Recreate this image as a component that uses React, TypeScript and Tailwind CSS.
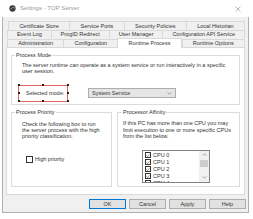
import React from 'react';

// --- Tab rows (back to front) ---
const tabRows: string[][] = [
  ['Certificate Store', 'Service Ports', 'Security Policies', 'Local Historian'],
  ['Event Log', 'ProgID Redirect', 'User Manager', 'Configuration API Service'],
  ['Administration', 'Configuration', 'Runtime Process', 'Runtime Options'],
];

const activeTab = 'Runtime Process';

function CheckBox({ checked, size = 'sm' }: { checked?: boolean; size?: 'sm' | 'md' }) {
  return (
    <span
      className={
        size === 'md'
          ? 'flex h-[7px] w-[7px] shrink-0 items-center justify-center border border-[#333] bg-white'
          : 'flex h-[6px] w-[6px] shrink-0 items-center justify-center border border-[#333] bg-white'
      }
    >
      {checked && (
        <svg viewBox="0 0 6 6" className="h-[5px] w-[5px]">
          <path d="M0.8 3 L2.3 4.5 L5.2 1.2" fill="none" stroke="#222" strokeWidth="0.8" />
        </svg>
      )}
    </span>
  );
}

function Handle({ className }: { className: string }) {
  return <span className={'absolute h-[2px] w-[2px] bg-[#222] ' + className} />;
}

export default function App() {
  return (
    <div className="h-[219px] w-[253px] overflow-hidden bg-white font-['Liberation_Sans',Arial,sans-serif] text-[5.5px] leading-[6.5px] text-[#333]">
      <div className="ml-[2px] flex h-[213px] w-[247px] flex-col border-x border-b border-[#b0b0b0] bg-[#f0f0f0]">
        {/* Title bar */}
        <div className="-mx-px flex h-[17px] shrink-0 items-center bg-white pl-[7px] pr-[8px]">
          <svg viewBox="0 0 8 8" className="h-[7px] w-[7px]">
            <circle cx="4" cy="4" r="3.6" fill="#3b3b3b" />
            <path d="M1.6 4.6 Q4 2.2 6.6 3.2" fill="none" stroke="#bdbdbd" strokeWidth="0.8" />
          </svg>
          <span className="ml-[4px] text-[6.1px] text-[#9a9a9a]">Settings - TOP Server</span>
          <svg viewBox="0 0 6 6" className="ml-auto h-[6px] w-[6px]">
            <path d="M0.5 0.5 L5.5 5.5 M5.5 0.5 L0.5 5.5" stroke="#8a8a8a" strokeWidth="0.6" />
          </svg>
        </div>

        {/* Tabs */}
        <div className="mt-[4px] flex flex-col px-[3px]">
          {tabRows.map((row, i) => (
            <div key={i} className={'flex items-end ' + (i === 0 ? 'pl-[2px]' : 'pl-[1px]') + (i === 2 ? ' relative z-10' : '')}>
              {row.map((t, j) => (
                <div
                  key={t}
                  className={
                    t === activeTab
                      ? '-mb-px flex h-[10px] flex-auto items-center justify-center border-x border-t border-[#d9d9d9] bg-white whitespace-nowrap'
                      : 'flex h-[8.5px] flex-auto items-center justify-center border-t border-l border-[#d9d9d9] bg-[#f0f0f0] whitespace-nowrap' +
                        (j === row.length - 1 ? ' border-r' : '')
                  }
                >
                  {t}
                </div>
              ))}
            </div>
          ))}

          {/* Panel */}
          <div className="flex h-[148px] flex-col border border-[#d9d9d9] bg-white px-[4px] pt-[4px]">
            <fieldset className="border border-[#dcdcdc] pb-[2px] pl-[6px]">
              <legend className="-ml-[3px] px-[1px] leading-[7px]">Process Mode</legend>
              <p className="ml-[4px] mt-[2.5px] leading-[6px]">
                The server runtime can operate as a system service or run interactively in a specific
                <br />
                user session.
              </p>
              <div className="mt-[11px] flex items-center">
                <div className="relative flex h-[17px] w-[50px] items-center border-[1.5px] border-[#e06464] pl-[7px]">
                  Selected mode:
                  <Handle className="-left-[1.5px] -top-[1.5px]" />
                  <Handle className="left-[23px] -top-[1.5px]" />
                  <Handle className="-right-[1.5px] -top-[1.5px]" />
                  <Handle className="-left-[1.5px] top-[6px]" />
                  <Handle className="-right-[1.5px] top-[6px]" />
                  <Handle className="-left-[1.5px] -bottom-[1.5px]" />
                  <Handle className="left-[23px] -bottom-[1.5px]" />
                  <Handle className="-right-[1.5px] -bottom-[1.5px]" />
                </div>
                <div className="ml-[20px] flex h-[10px] w-[88px] items-center border border-[#adadad] bg-[#e5e5e5] pl-[3px] pr-[3px]">
                  <span>System Service</span>
                  <svg viewBox="0 0 6 4" className="ml-auto h-[3px] w-[5px]">
                    <path d="M0.5 0.5 L3 3 L5.5 0.5" fill="none" stroke="#555" strokeWidth="0.7" />
                  </svg>
                </div>
              </div>
            </fieldset>

            <div className="mt-[4px] flex gap-[5px]">
              <fieldset className="h-[78px] w-[101px] shrink-0 border border-[#dcdcdc] pl-[10px]">
                <legend className="-ml-[7px] px-[1px] leading-[7px]">Process Priority</legend>
                <p className="mt-[5.5px] leading-[6px]">
                  Check the following box to run
                  <br />
                  the server process with the high
                  <br />
                  priority classification.
                </p>
                <label className="ml-[4px] mt-[17px] flex items-center gap-[2px]">
                  <CheckBox size="md" />
                  <span>High priority</span>
                </label>
              </fieldset>

              <fieldset className="h-[78px] flex-1 border border-[#dcdcdc] pl-[5px]">
                <legend className="-ml-[1px] px-[1px] leading-[7px]">Processor Affinity</legend>
                <p className="mt-[4.5px] leading-[6.5px]">
                  If this PC has more than one CPU you may
                  <br />
                  limit execution to one or more specific CPUs
                  <br />
                  from the list below.
                </p>
                <div className="ml-[19px] mt-[10px] flex h-[33px] w-[68px] border border-[#828282]">
                  <div className="flex flex-1 flex-col overflow-hidden pl-[2px] pt-[1px]">
                    {['CPU 0', 'CPU 1', 'CPU 2', 'CPU 3', 'CPU 4'].map((c) => (
                      <div key={c} className="flex h-[7px] shrink-0 items-center gap-[2px]">
                        <CheckBox checked />
                        <span>{c}</span>
                      </div>
                    ))}
                  </div>
                  <div className="flex w-[10px] flex-col bg-[#f0f0f0]">
                    <div className="flex h-[8px] items-center justify-center">
                      <svg viewBox="0 0 6 4" className="h-[3px] w-[5px]">
                        <path d="M0.5 3.5 L3 1 L5.5 3.5" fill="none" stroke="#606060" strokeWidth="0.7" />
                      </svg>
                    </div>
                    <div className="mx-[1px] mt-[1px] h-[7px] bg-[#cdcdcd]" />
                    <div className="mt-auto flex h-[8px] items-center justify-center">
                      <svg viewBox="0 0 6 4" className="h-[3px] w-[5px]">
                        <path d="M0.5 0.5 L3 3 L5.5 0.5" fill="none" stroke="#606060" strokeWidth="0.7" />
                      </svg>
                    </div>
                  </div>
                </div>
              </fieldset>
            </div>
          </div>
        </div>

        {/* Dialog buttons */}
        <div className="mt-[4px] flex justify-end gap-[3px] pr-[2px]">
          {['OK', 'Cancel', 'Apply', 'Help'].map((b) => (
            <button
              key={b}
              className={
                'flex h-[10px] w-[37px] items-center justify-center border bg-[#e1e1e1] ' +
                (b === 'OK' ? 'border-[#0078d7]' : 'border-[#adadad]')
              }
            >
              {b}
            </button>
          ))}
        </div>
      </div>
    </div>
  );
}
